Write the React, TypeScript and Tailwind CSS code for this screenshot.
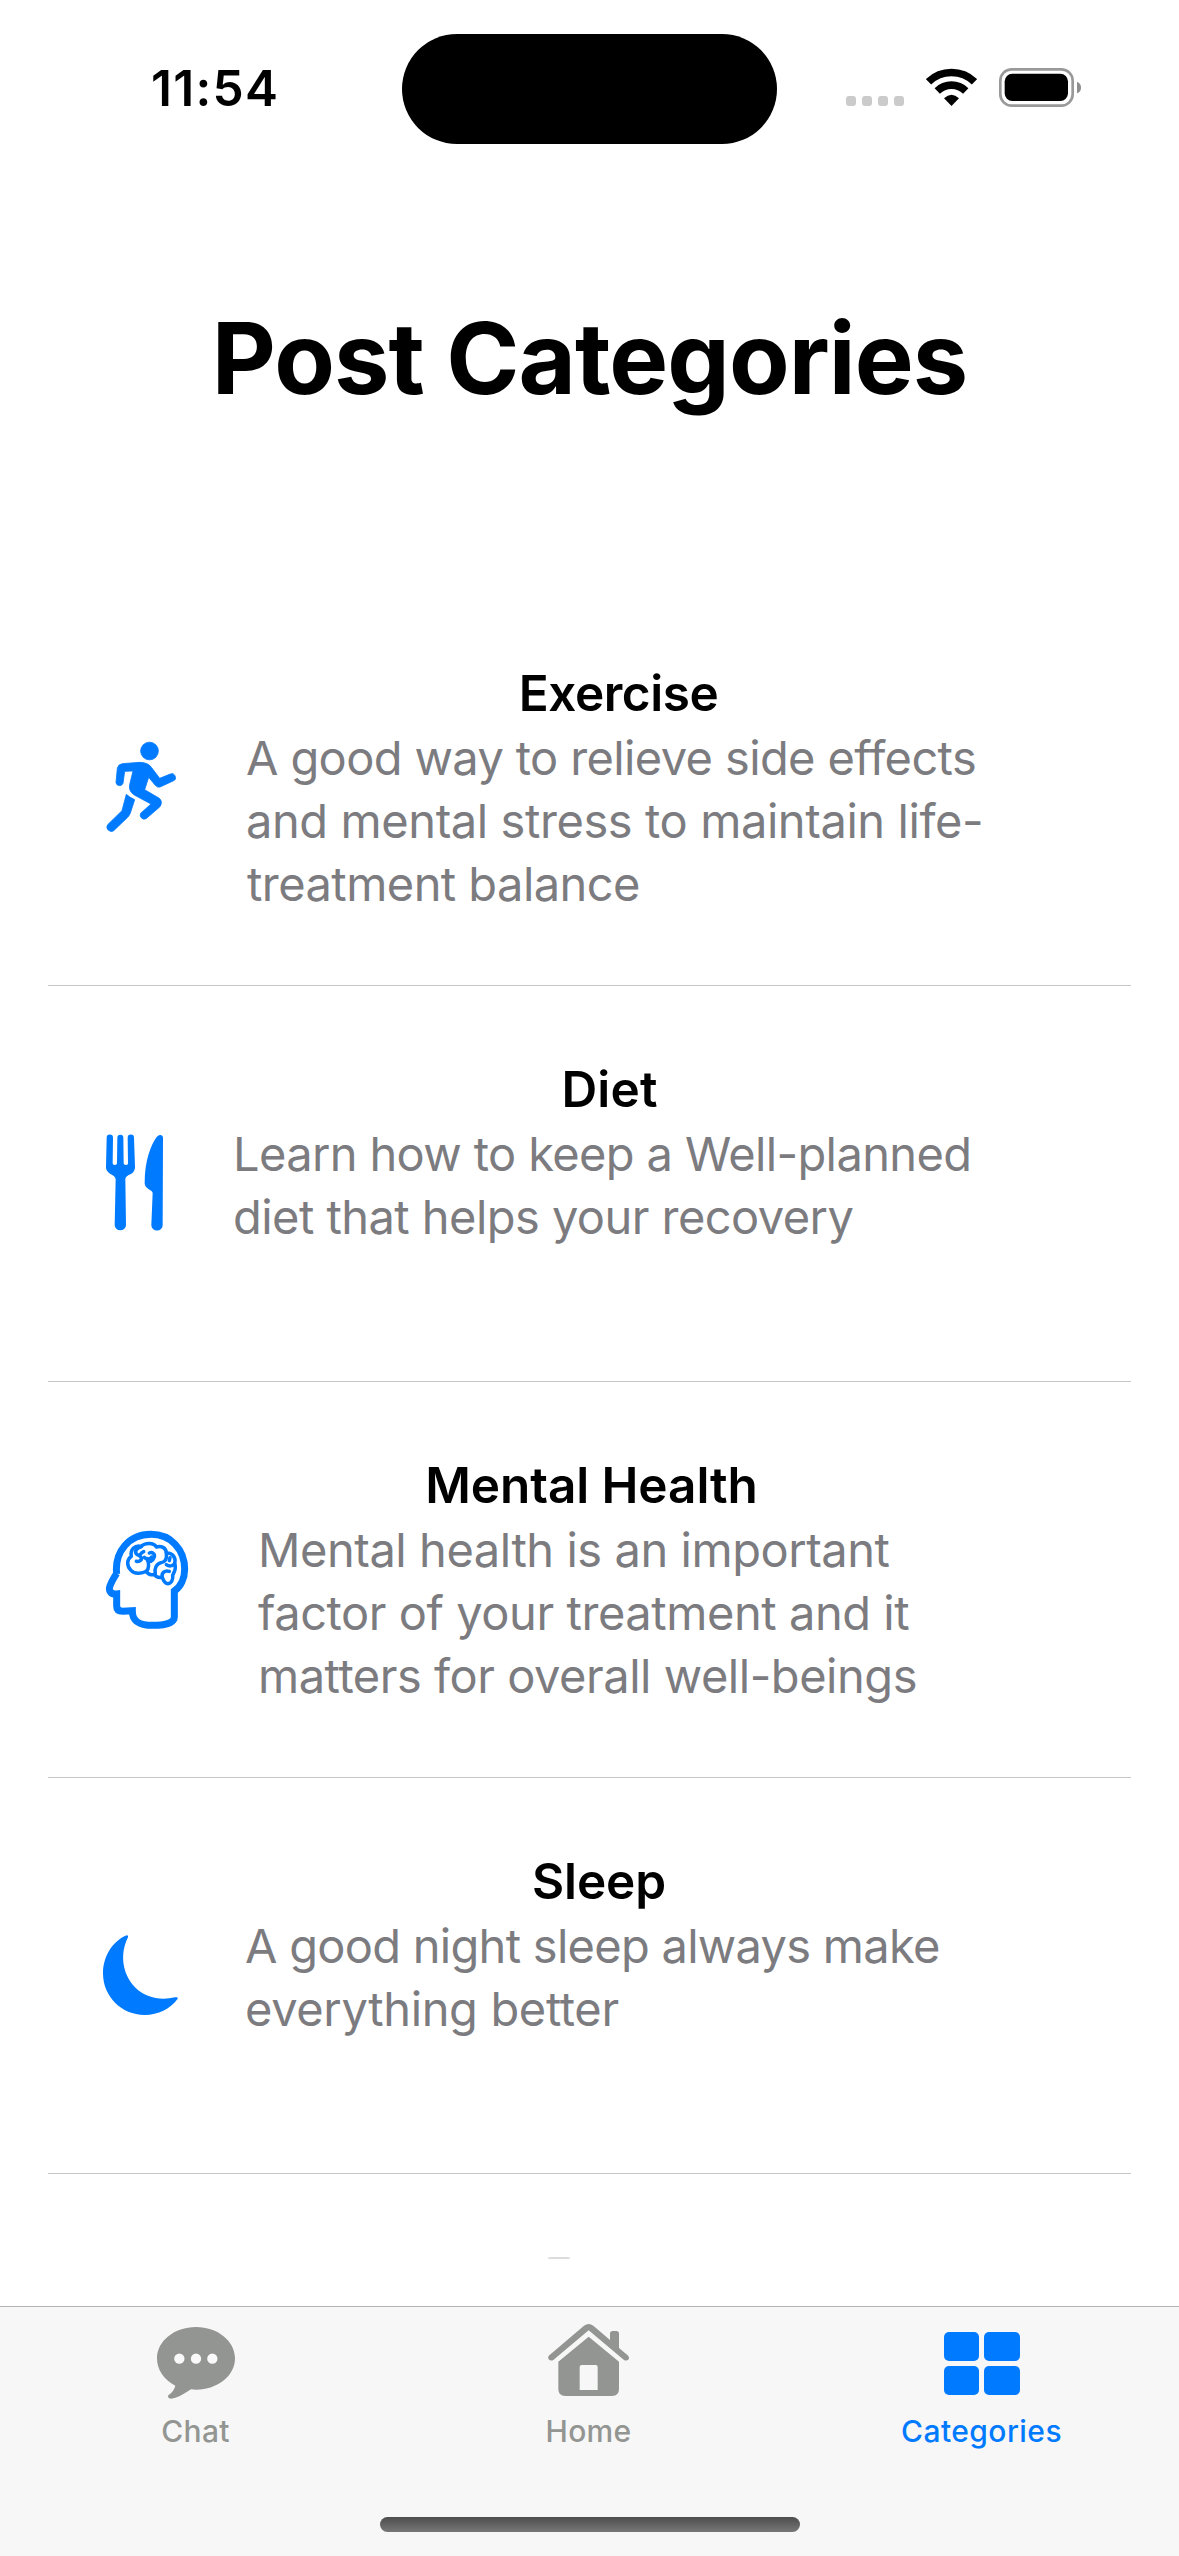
import type { ReactNode } from "react";

const RunnerIcon = () => (
  <svg
    viewBox="75 60 216 279"
    className="h-[93px] w-[72px] fill-[#007aff] stroke-[#007aff]"
    strokeWidth="2.5"
    strokeLinejoin="round"
  >
    <circle cx="208.500" cy="93" r="26.500" />
    <path d="M112 145Q114 133 127 131L180 127Q205 128 215 143L239 175L271 162A11 11 0 0 1 279 183L240 201Q232 203 226 196L206 172L194 209L238 235Q250 246 239 261L198 296A12 12 0 0 1 182 280L213 252L163 225Q145 213 149 194L159 153L134 154L129 190A11 11 0 0 1 108 188Z" />
    <path d="M139 223Q148 232 164 239L151 279Q148 287 143 292L101 332A13 13 0 0 1 83 314L126 272Z" />
  </svg>
);

const CutleryIcon = () => (
  <svg viewBox="75 72 177 291" className="h-[97px] w-[59px] fill-[#007aff]">
    <path d="M80 83A9.500 9.500 0 0 1 99 83L98 160Q98 165 104 165Q111 165 111 160L112 83A9 9 0 0 1 130 83L131 160Q131 165 138 165Q145 165 144 160L143 83A9.500 9.500 0 0 1 162 83L165 172Q165 185 153 192Q137 198 136 207L138 345A17 16 0 0 1 104 345L107 207Q106 198 90 191Q78 184 78 172Z" />
    <path d="M249 84L248 346A16.500 15 0 0 1 214 346L218 248Q217 243 206 238Q194 230 194 220C194 150 213 105 230 81Q236 74 241 75Q249 76 249 84Z" />
  </svg>
);

const BrainIcon = () => (
  <svg
    viewBox="75 60 252 300"
    className="h-[100px] w-[84px] fill-none stroke-[#007aff]"
    strokeLinecap="round"
    strokeLinejoin="round"
  >
    <path
      strokeWidth="21"
      strokeLinecap="butt"
      strokeLinejoin="miter"
      d="M110 192C103 125 147 73 213 73C272 73 314 118 314 178C314 205 302 230 283 243L283 320C283 340 250 346 218 346C178 346 157 335 157 302L128 304Q110 304 110 288L110 252C94 254 84 243 90 228Q95 213 110 190"
    />
    <g strokeWidth="10.500">
      <path d="M154 139C150 120 164 104 184 109C193 98 222 96 229 111C243 106 259 113 259 129C277 127 289 144 284 160C291 178 281 187 278 196C280 207 275 220 264 221C253 221 249 209 247 202C236 204 227 200 223 193C213 196 204 194 199 184C185 192 163 192 153 181C140 169 139 149 154 139" />
      <path d="M184 110C169 113 161 127 172 134C183 139 188 145 182 151C179 154 174 155 169 154" />
      <path d="M191 125C186 127 183 130 182 132" />
      <path d="M199 184C208 176 207 159 201 146M193 142C199 149 210 149 215 141" />
      <path d="M208 129C217 125 227 133 222 143C220 150 216 152 212 154" />
      <path d="M259 129C262 149 253 157 243 158C229 162 222 176 226 192" />
      <path d="M284 160C278 170 266 169 259 164M247 202C243 188 255 180 268 184M268 152L270 143" />
    </g>
  </svg>
);

const MoonIcon = () => (
  <svg viewBox="66 72 231 246" className="-ml-[3px] h-[82px] w-[77px] fill-[#007aff]">
    <path d="M136 77Q146 73 144 82C120 130 125 190 165 232C195 262 240 273 285 262Q297 260 292 268C270 297 235 315 194 315C124 315 69 259 69 190C69 140 96 96 136 77Z" />
  </svg>
);

type Category = {
  title: string;
  titleClass: string;
  lines: [string, string][];
  icon: ReactNode;
  iconClass: string;
  textClass: string;
};

const categories: Category[] = [
  {
    title: "Exercise",
    titleClass: "tracking-[-0.45px]",
    lines: [
      ["A good way to relieve side effects", "tracking-[-0.62px] -ml-px"],
      ["and mental stress to maintain life-", "tracking-[-0.41px] -ml-px"],
      ["treatment balance", "tracking-[-0.55px]"],
    ],
    icon: <RunnerIcon />,
    iconClass: "w-[142px] pt-[150px]",
    textClass: "w-[743px]",
  },
  {
    title: "Diet",
    titleClass: "tracking-[0.2px]",
    lines: [
      ["Learn how to keep a Well-planned", "tracking-[-0.63px]"],
      ["diet that helps your recovery", "tracking-[-0.55px]"],
    ],
    icon: <CutleryIcon />,
    iconClass: "w-[128px] pt-[148px]",
    textClass: "w-[753px]",
  },
  {
    title: "Mental Health",
    titleClass: "tracking-[-0.07px]",
    lines: [
      ["Mental health is an important", "tracking-[-0.45px]"],
      ["factor of your treatment and it", "tracking-[-0.44px]"],
      ["matters for overall well-beings", "tracking-[-0.47px]"],
    ],
    icon: <BrainIcon />,
    iconClass: "w-[153px] pt-[148px]",
    textClass: "w-[667px]",
  },
  {
    title: "Sleep",
    titleClass: "tracking-[-0.1px]",
    lines: [
      ["A good night sleep always make", "tracking-[-0.72px]"],
      ["everything better", "tracking-[-0.35px]"],
    ],
    icon: <MoonIcon />,
    iconClass: "w-[140px] pt-[156px]",
    textClass: "w-[708px]",
  },
];

function StatusBar() {
  return (
    <header className="flex h-[177px] shrink-0 items-start">
      <div className="w-[402px] pt-[58px] pl-[151px] text-[49.5px] leading-[60px] font-semibold tracking-[1.3px]">
        11:54
      </div>
      <div className="mt-[34px] h-[110px] w-[375px] rounded-full bg-black" />
      <div className="ml-[69px] flex gap-[6px] pt-[96px]">
        {[0, 1, 2, 3].map((dot) => (
          <span key={dot} className="size-[10px] rounded-[3px] bg-[#cbcbcb]" />
        ))}
      </div>
      <svg viewBox="318 84 153 117" className="mt-[68px] ml-[22px] h-[39px] w-[51px]">
        <g fill="none" stroke="black" strokeWidth="23">
          <path d="M325.5 125.4A99.5 99.5 0 0 1 463.5 125.4" />
          <path d="M351.8 152.8A61.5 61.5 0 0 1 437.2 152.8" />
        </g>
        <path d="M394.5 198L372 175Q394.5 153 417 175Z" />
      </svg>
      <svg viewBox="534 84 252 117" className="mt-[68px] ml-[21px] h-[39px] w-[84px]">
        <rect x="541" y="88" width="217" height="109" rx="34" fill="none" stroke="#999" strokeWidth="8" />
        <rect x="554" y="101" width="190" height="82" rx="23" />
        <path d="M771 125Q783 129 783 143Q783 156 771 160Z" fill="#8e8e8e" />
      </svg>
    </header>
  );
}

function CategoryRow({ category }: { category: Category }) {
  return (
    <li className="flex h-[396px] border-b border-[#c6c6c8] pl-[57px]">
      <div className={`shrink-0 ${category.iconClass}`}>{category.icon}</div>
      <div className={`pt-[71px] ${category.textClass}`}>
        <h2 className={`text-center text-[49.5px] leading-[65px] font-semibold ${category.titleClass}`}>
          {category.title}
        </h2>
        <p className="text-[47px] leading-[63px] whitespace-nowrap text-[#7c7c80]">
          {category.lines.map(([line, lineClass]) => (
            <span key={line} className={`block ${lineClass}`}>
              {line}
            </span>
          ))}
        </p>
      </div>
    </li>
  );
}

function TabBar() {
  return (
    <nav className="grid h-[211px] shrink-0 grid-cols-3 border-t border-[#b2b2b2] bg-[#f7f7f7] text-center text-[30px] leading-9 font-medium text-[#939592]">
      <div className="pr-[2px]">
        <div className="flex h-[106px] justify-center pt-[20px]">
          <svg viewBox="81 82 234 216" className="h-[72px] w-[78px]">
            <path
              d="M198 82C263 82 315 124 315 176C315 229 263 270 198 270Q190 270 183 269C165 281 143 295 123 297Q111 296 115 287Q132 275 136 258C102 241 81 210 81 176C81 124 133 82 198 82Z"
              fill="#939592"
            />
            <g fill="#f9f9f9">
              <circle cx="148" cy="177" r="15.5" />
              <circle cx="198" cy="177" r="15.5" />
              <circle cx="247" cy="177" r="15.5" />
            </g>
          </svg>
        </div>
        <div className="tracking-[0.3px]">Chat</div>
      </div>
      <div className="pr-[2px]">
        <div className="flex h-[106px] justify-center pt-[17px]">
          <svg viewBox="84 72 243 216" className="h-[72px] w-[81px]" fill="#939592">
            <path d="M192 77Q206 67 220 77L270 120V101Q270 93 278 93H289Q297 93 297 101V144L323 166Q329 172 326 178Q320 184 312 180L206 91L100 180Q92 184 86 178Q82 171 88 166Z" />
            <path
              d="M206 110L297 185V267Q297 288 276 288H136Q115 288 115 267V185ZM185 195Q179 195 179 201V270H233V201Q233 195 227 195Z"
              fillRule="evenodd"
            />
          </svg>
        </div>
        <div className="tracking-[0.3px]">Home</div>
      </div>
      <div className="pr-[2px] text-[#007aff]">
        <div className="flex h-[106px] justify-center pt-[25px]">
          <div className="grid h-[63px] w-[76px] grid-cols-2 gap-[5px]">
            {[0, 1, 2, 3].map((tile) => (
              <span key={tile} className="rounded-[5px] bg-[#007aff]" />
            ))}
          </div>
        </div>
        <div className="tracking-[0.45px]">Categories</div>
      </div>
    </nav>
  );
}

export default function App() {
  return (
    <div className="flex h-[2556px] w-[1179px] flex-col overflow-hidden bg-white font-['Inter',sans-serif] text-black">
      <StatusBar />
      <h1 className="h-[413px] shrink-0 pt-[121px] text-center text-[99px] leading-[120px] font-bold tracking-[-0.95px]">
        Post Categories
      </h1>
      <ul className="mx-[48px] h-[1669px] shrink-0 overflow-hidden">
        {categories.map((category) => (
          <CategoryRow key={category.title} category={category} />
        ))}
        <li className="flex pt-[83px] pl-[500px]">
          <span className="h-[2px] w-[22px] rounded-t-full bg-[#dcdcdc]" />
        </li>
      </ul>
      <div className="h-[47px] shrink-0" />
      <TabBar />
      <div className="flex h-[39px] justify-center bg-[#f7f7f7]">
        <div className="h-[15px] w-[420px] rounded-full bg-linear-to-b from-[#4d4d4d] to-[#777]" />
      </div>
    </div>
  );
}
